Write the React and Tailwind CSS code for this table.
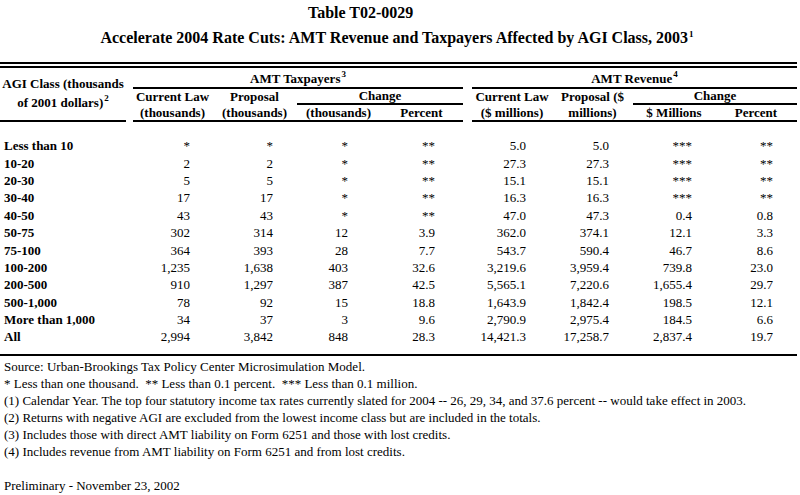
import React from "react";

const rows = [
  ["Less than 10", "*", "*", "*", "**", "5.0", "5.0", "***", "**"],
  ["10-20", "2", "2", "*", "**", "27.3", "27.3", "***", "**"],
  ["20-30", "5", "5", "*", "**", "15.1", "15.1", "***", "**"],
  ["30-40", "17", "17", "*", "**", "16.3", "16.3", "***", "**"],
  ["40-50", "43", "43", "*", "**", "47.0", "47.3", "0.4", "0.8"],
  ["50-75", "302", "314", "12", "3.9", "362.0", "374.1", "12.1", "3.3"],
  ["75-100", "364", "393", "28", "7.7", "543.7", "590.4", "46.7", "8.6"],
  ["100-200", "1,235", "1,638", "403", "32.6", "3,219.6", "3,959.4", "739.8", "23.0"],
  ["200-500", "910", "1,297", "387", "42.5", "5,565.1", "7,220.6", "1,655.4", "29.7"],
  ["500-1,000", "78", "92", "15", "18.8", "1,643.9", "1,842.4", "198.5", "12.1"],
  ["More than 1,000", "34", "37", "3", "9.6", "2,790.9", "2,975.4", "184.5", "6.6"],
  ["All", "2,994", "3,842", "848", "28.3", "14,421.3", "17,258.7", "2,837.4", "19.7"],
];

const pads = [
  "pr-[22px]",
  "pr-[24px]",
  "pr-[32px]",
  "pr-[28px]",
  "pr-[26px]",
  "pr-[24px]",
  "pr-[23px]",
  "pr-[24px]",
];

const COLS =
  "grid w-[797px] grid-cols-[126px_7px_79px_85px_83px_83px_9px_80px_81px_82px_82px]";

function Sup({ children }) {
  return (
    <sup className="text-[9px] leading-none relative top-[-6px] ml-[1px]">{children}</sup>
  );
}

export default function App() {
  return (
    <div className="w-[800px] h-[495px] bg-white text-black [font-family:Liberation_Serif,Times_New_Roman,serif] overflow-hidden">
      <div className="h-[25px] flex items-center pl-[308px] font-bold text-[16px]">
        Table T02-0029
      </div>
      <div className="h-[25px] flex items-center justify-center font-bold text-[16px] pr-[6px]">
        <span>
          Accelerate 2004 Rate Cuts: AMT Revenue and Taxpayers Affected by AGI Class, 2003
          <Sup>1</Sup>
        </span>
      </div>
      <div className="h-[12px]" />
      <div className="w-[797px] h-[6px] border-y-2 border-black" />

      {/* Header */}
      <div className={`${COLS} grid-rows-[21px_16px_17px] font-bold text-[13px] leading-[16px]`}>
        <div className="col-start-1 row-start-1 row-span-3 border-b-2 flex flex-col items-center justify-center text-center leading-[19px] pb-[3px]">
          <span>AGI Class (thousands</span>
          <span>
            of 2001 dollars)<Sup>2</Sup>
          </span>
        </div>
        <div className="col-start-3 col-span-4 row-start-1 border-b-2 flex items-end justify-center">
          <span>
            AMT Taxpayers<Sup>3</Sup>
          </span>
        </div>
        <div className="col-start-8 col-span-4 row-start-1 border-b-2 flex items-end justify-center">
          <span>
            AMT Revenue<Sup>4</Sup>
          </span>
        </div>

        <div className="col-start-3 row-start-2 row-span-2 border-b-2 flex flex-col items-center justify-center text-center">
          <span>Current Law</span>
          <span>(thousands)</span>
        </div>
        <div className="col-start-4 row-start-2 row-span-2 border-b-2 flex flex-col items-center justify-center text-center">
          <span>Proposal</span>
          <span>(thousands)</span>
        </div>
        <div className="col-start-5 col-span-2 row-start-2 border-b-2 flex items-center justify-center leading-[14px]">
          Change
        </div>
        <div className="col-start-5 row-start-3 border-b-2 flex items-center justify-center">
          (thousands)
        </div>
        <div className="col-start-6 row-start-3 border-b-2 flex items-center justify-center">
          Percent
        </div>

        <div className="col-start-8 row-start-2 row-span-2 border-b-2 flex flex-col items-center justify-center text-center">
          <span>Current Law</span>
          <span>($ millions)</span>
        </div>
        <div className="col-start-9 row-start-2 row-span-2 border-b-2 flex flex-col items-center justify-center text-center">
          <span>Proposal ($</span>
          <span>millions)</span>
        </div>
        <div className="col-start-10 col-span-2 row-start-2 border-b-2 flex items-center justify-center leading-[14px]">
          Change
        </div>
        <div className="col-start-10 row-start-3 border-b-2 flex items-center justify-center">
          $ Millions
        </div>
        <div className="col-start-11 row-start-3 border-b-2 flex items-center justify-center">
          Percent
        </div>
      </div>

      {/* Body */}
      <div className="pt-[15px] pb-[8px] border-b-2 w-[797px] text-[13px]">
        {rows.map((r) => (
          <div key={r[0]} className={`${COLS} w-[797px] h-[17.4px] items-center leading-[17px]`}>
            <div className="pl-[4px] font-bold whitespace-nowrap">{r[0]}</div>
            <div />
            {r.slice(1, 5).map((v, i) => (
              <div key={i} className={`text-right ${pads[i]}`}>
                {v}
              </div>
            ))}
            <div />
            {r.slice(5).map((v, i) => (
              <div key={i + 4} className={`text-right ${pads[i + 4]}`}>
                {v}
              </div>
            ))}
          </div>
        ))}
      </div>

      {/* Footer */}
      <div className="pt-[2px] pl-[4px] text-[13px] leading-[17px] flex flex-col">
        <span>Source: Urban-Brookings Tax Policy Center Microsimulation Model.</span>
        <span className="whitespace-pre">
          {"* Less than one thousand.  ** Less than 0.1 percent.  *** Less than 0.1 million."}
        </span>
        <span>
          (1) Calendar Year. The top four statutory income tax rates currently slated for 2004 -- 26, 29, 34, and 37.6 percent -- would take effect in 2003.
        </span>
        <span>
          (2) Returns with negative AGI are excluded from the lowest income class but are included in the totals.
        </span>
        <span>
          (3) Includes those with direct AMT liability on Form 6251 and those with lost credits.
        </span>
        <span>(4) Includes revenue from AMT liability on Form 6251 and from lost credits.</span>
        <span className="h-[17px]" />
        <span>Preliminary - November 23, 2002</span>
      </div>
    </div>
  );
}
